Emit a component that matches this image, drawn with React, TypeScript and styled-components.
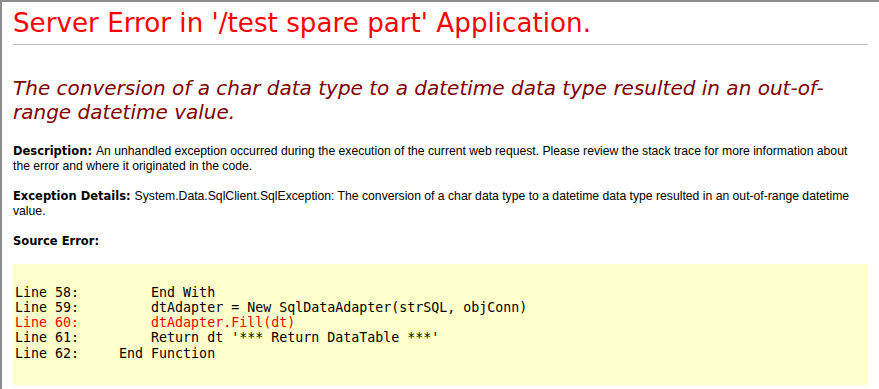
import * as React from 'react';
import styled, { createGlobalStyle } from 'styled-components';

const GlobalStyle = createGlobalStyle`
  html, body {
    margin: 0;
    padding: 0;
    background: #ffffff;
  }
`;

const Window = styled.div`
  box-sizing: border-box;
  min-height: 389px;
  border-top: 2px solid #8c8c8c;
  border-left: 2px solid #8c8c8c;
  padding: 0 11px 0 11px;
  background: #ffffff;
  overflow: hidden;
`;

const Title = styled.h1`
  margin: 6px 0 0 0;
  font-family: 'DejaVu Sans', Verdana, sans-serif;
  font-weight: normal;
  font-size: 26.2px;
  line-height: 30px;
  color: #ff0000;
  white-space: nowrap;
`;

const Rule = styled.hr`
  margin: 6px 0 0 0;
  height: 0;
  border: 0;
  border-top: 1px solid #c0c0c0;
`;

const Subtitle = styled.h2`
  margin: 31px 0 0 0;
  font-family: 'DejaVu Sans', Verdana, sans-serif;
  font-weight: normal;
  font-style: italic;
  font-size: 20px;
  line-height: 24px;
  color: #800000;
  white-space: nowrap;
`;

const Details = styled.div`
  margin-top: 20px;
  font-family: 'Liberation Sans', Arial, sans-serif;
  font-size: 12.2px;
  line-height: 15px;
  color: #000000;
  white-space: nowrap;
`;

const Label = styled.b`
  font-family: 'DejaVu Sans', Verdana, sans-serif;
  font-weight: bold;
  font-size: 11.5px;
  line-height: 1;
`;

const SourceBox = styled.div`
  background: #ffffcc;
  padding: 20.5px 2px 23.8px 2px;
`;

const Code = styled.pre`
  margin: 0;
  font-family: 'DejaVu Sans Mono', Consolas, monospace;
  font-size: 13.3px;
  line-height: 15.33px;
`;

const CodeLine = styled.div<{ $error?: boolean }>`
  color: ${(p) => (p.$error ? '#ff0000' : '#000000')};
`;

const source = [
  { no: 58, text: '         End With' },
  { no: 59, text: '         dtAdapter = New SqlDataAdapter(strSQL, objConn)' },
  { no: 60, text: '         dtAdapter.Fill(dt)', error: true },
  { no: 61, text: "         Return dt '*** Return DataTable ***'" },
  { no: 62, text: '     End Function' },
];

export default function App() {
  return (
    <>
      <GlobalStyle />
      <Window>
        <Title>Server Error in '/test spare part' Application.</Title>
        <Rule />
        <Subtitle>
          The conversion of a char data type to a datetime data type resulted in an out-of-
          <br />
          range datetime value.
        </Subtitle>
        <Details>
          <Label>Description: </Label>
          An unhandled exception occurred during the execution of the current web request. Please
          review the stack trace for more information about
          <br />
          the error and where it originated in the code.
          <br />
          <br />
          <Label>Exception Details: </Label>
          System.Data.SqlClient.SqlException: The conversion of a char data type to a datetime data
          type resulted in an out-of-range datetime
          <br />
          value.
          <br />
          <br />
          <Label>Source Error:</Label>
          <br />
          <br />
        </Details>
        <SourceBox>
          <Code>
            {source.map((line) => (
              <CodeLine key={line.no} $error={line.error}>
                {`Line ${line.no}:${line.text}`}
              </CodeLine>
            ))}
          </Code>
        </SourceBox>
      </Window>
    </>
  );
}
